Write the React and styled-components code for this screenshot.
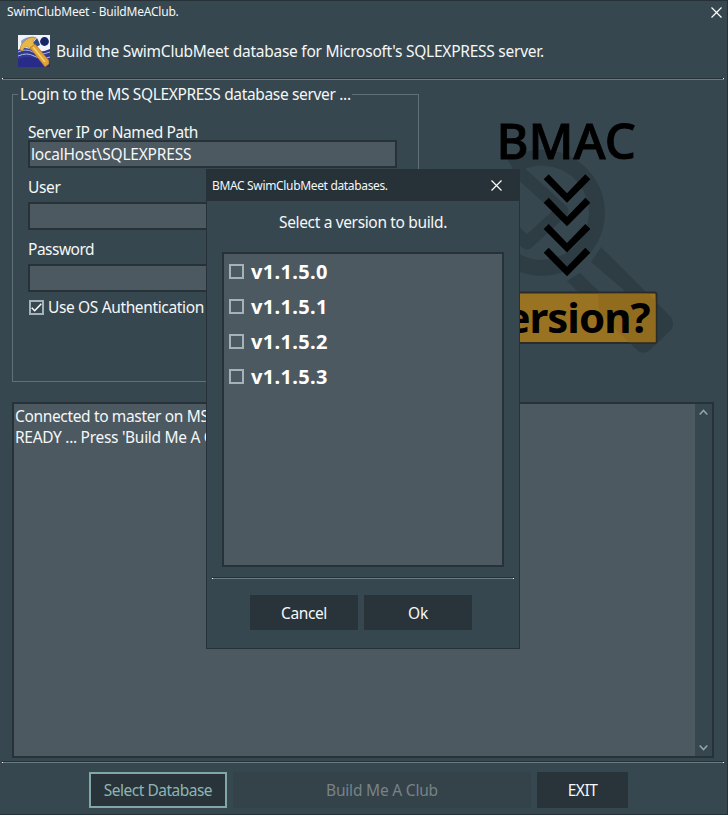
import React from "react";
import styled, { createGlobalStyle } from "styled-components";

const Global = createGlobalStyle`
  * { box-sizing: border-box; }
  body { margin: 0; background: #37474f; }
`;

const Window = styled.div`
  position: relative;
  display: flex;
  flex-direction: column;
  width: 728px;
  height: 815px;
  overflow: hidden;
  background: #37474f;
  border: solid #263238;
  border-width: 1px 1px 1px 0;
  color: #f4f7f8;
  font-family: "Noto Sans", "Open Sans", sans-serif;
  font-size: 15.5px;
  line-height: 20px;
`;

const Text = styled.span`
  display: block;
  white-space: nowrap;
  letter-spacing: ${(p) => p.$track ?? -0.3}px;
`;

const TitleBar = styled.header`
  display: flex;
  align-items: center;
  justify-content: space-between;
  height: 22px;
  padding: 0 5px 0 7px;
  font-size: 12px;
`;

const CloseIcon = styled.svg`
  width: 11px;
  height: 11px;
  stroke: #fff;
  stroke-width: 1.2;
`;

const Banner = styled.div`
  display: flex;
  align-items: center;
  gap: 6px;
  height: 55px;
  padding: 1px 0 0 18px;
`;

const AppIcon = styled.svg`
  width: 32px;
  height: 32px;
`;

const Rule = styled.div`
  flex: none;
  display: flex;
  justify-content: space-between;
  height: 2px;
  margin: ${(p) => p.$margin};
  background: linear-gradient(#263238 50%, #6b7a81 50%);

  &::before,
  &::after {
    content: "";
    width: 1px;
    height: 1px;
    margin-top: ${(p) => (p.$low ? 1 : 0)}px;
    background: #fff;
  }
`;

const Upper = styled.main`
  display: flex;
  height: 322px;
  padding: 4px 0 0 12px;
`;

const LoginGroup = styled.fieldset`
  width: 407px;
  height: 298px;
  margin: 0;
  padding: 0 0 0 15px;
  border: 1px solid #617077;
`;

const Legend = styled.legend`
  margin-left: -10px;
  padding: 0 1px 0 2px;
`;

const Field = styled.label`
  display: flex;
  flex-direction: column;
  height: ${(p) => p.$height}px;
  padding-top: ${(p) => p.$top}px;
`;

const Input = styled.span`
  display: flex;
  align-items: center;
  width: 369px;
  height: ${(p) => p.$height}px;
  margin-top: ${(p) => p.$gap}px;
  padding-left: 1px;
  background: #4c5961;
  border: 2px solid #263238;
`;

const CheckRow = styled.div`
  display: flex;
  align-items: center;
  gap: 4px;
  padding: 5px 0 0 1px;
`;

const Check = styled.svg`
  width: 15px;
  height: 15px;
  flex: none;
  fill: none;
`;

const Artwork = styled.svg`
  width: 300px;
  height: 280px;
  font-family: "Noto Sans", sans-serif;
`;

const Memo = styled.section`
  display: flex;
  height: 356px;
  margin: 0 13px 0 12px;
  background: #4c5961;
  border: 2px solid #263238;
`;

const Lines = styled.div`
  flex: 1;
  padding: 2px 0 0 1px;
  line-height: 21px;
`;

const ScrollBar = styled.div`
  display: flex;
  flex-direction: column;
  justify-content: space-between;
  align-items: center;
  width: 17px;
  padding: 5px 0;
  background: #37474f;
`;

const Arrow = styled.svg`
  width: 9px;
  height: 7px;
  fill: none;
  stroke: #94a3aa;
  stroke-width: 1.6;
`;

const Footer = styled.footer`
  display: flex;
  gap: 6px;
  padding: 9px 0 0 89px;
`;

const Button = styled.button`
  display: flex;
  align-items: center;
  justify-content: center;
  width: ${(p) => p.$width}px;
  height: ${(p) => p.$height ?? 36}px;
  margin: 0;
  padding: 0;
  border: ${(p) => (p.$focus ? "2px solid #80a8a6" : "0")};
  background: ${(p) => (p.disabled ? "#34434a" : "#29343a")};
  color: ${(p) => (p.disabled ? "#788287" : p.$focus ? "#8fb4b3" : "#f6f8f9")};
  font: inherit;
`;

const Dialog = styled.div`
  position: absolute;
  left: 206px;
  top: 168px;
  display: flex;
  flex-direction: column;
  width: 314px;
  height: 480px;
  background: #37474f;
  border: 1px solid #263238;
`;

const DialogTitle = styled.div`
  display: flex;
  align-items: center;
  justify-content: space-between;
  height: 31px;
  padding: 0 17px 0 5px;
  background: #263238;
  font-size: 12px;
`;

const Prompt = styled.div`
  display: flex;
  justify-content: center;
  padding: 11px 0 20px;
`;

const VersionList = styled.div`
  height: 315px;
  margin: 0 15px;
  padding: 0 0 0 5px;
  background: #4c5961;
  border: 2px solid #263238;
`;

const VersionRow = styled.div`
  display: flex;
  align-items: center;
  gap: 7px;
  height: 35px;
  font-size: 20px;
  font-weight: 700;
  color: #fff;
`;

const DialogButtons = styled.div`
  display: flex;
  justify-content: center;
  gap: 6px;
  padding: 16px 4px 0 0;
`;

const Close = () => (
  <CloseIcon viewBox="0 0 11 11">
    <path d="M.5.5l10 10M10.5.5l-10 10" />
  </CloseIcon>
);

const CheckMark = ({ checked }) => (
  <Check viewBox="0 0 15 15">
    <rect x="1" y="1" width="13" height="13" stroke="#a4b3ba" strokeWidth="2" />
    {checked && <path d="M2.7 7.7l3 3 6.6-7" stroke="#fff" strokeWidth="1.5" />}
  </Check>
);

const HammerIcon = () => (
  <AppIcon viewBox="0 0 32 32">
    <rect width="32" height="32" fill="#f1f3f8" />
    <path d="M3 6Q9 1 17 2L14 8 4 12z" fill="#8c9dcb" />
    <circle cx="26.5" cy="6.5" r="4.4" fill="#172567" />
    <path d="M0 15q7-4 14 0t18-1v18H0z" fill="#313995" />
    <path d="M0 17q8-4 15 0t17 0M0 21q9-4 16 0t16 1" fill="none" stroke="#adb9df" strokeWidth="1" />
    <path d="M0 24q11-4 20 0t12 1v7H0z" fill="#292b89" />
    <path d="M14 9l5-6 2 4 1 3-6 3z" fill="#304988" />
    <path d="M2 15q0-5 4-8.500Q11 1 18 2.500L15 6l1 3 2 1-5 5-3-3q-4-1-5 4z" fill="#e7b847" stroke="#8f712c" strokeWidth=".5" />
    <path d="M12 13l5-4 14 16.500v3.500l-4 3z" fill="#e2a335" stroke="#92632a" strokeWidth=".6" />
    <path d="M15 12l12 15" stroke="#f4d577" strokeWidth="1.3" />
  </AppIcon>
);

const ServerArt = () => (
  <Artwork viewBox="419 84 300 280">
    <g fill="none" stroke="#2e3c43">
      <path d="M514 167L562 211 527 243 512 229" strokeWidth="13" strokeLinejoin="round" />
      <path d="M512 166.500A55 55 0 1 1 489 228" strokeWidth="16" />
    </g>
    <path
      d="M601 247L671 317Q675 324 671 330L650 350Q644 355 638 351L567 281 580 273 611 303 625 291 591 262z"
      fill="#2e3c43"
    />
    <rect x="477" y="292.500" width="179.500" height="50.500" rx="2" fill="#9a7322" stroke="#292c28" strokeWidth="1.8" />
    <path d="M598 293.500h50l8 8v41H629l-30-30z" fill="#8a651b" fillOpacity=".55" />
    {[0, 23.5, 49.7, 73.5].map((y) => (
      <path key={y} transform={`translate(0 ${y})`} d="M543.700 179.200l5-5L567 193.300l18.300-19.100 5 5L567 202.700z" />
    ))}
    <text x="496.500" y="158.500" fontSize="49" fontWeight="500" stroke="#000" strokeWidth=".9">BMAC</text>
    <text x="649.500" y="332.500" fontSize="42" fontWeight="700" textAnchor="end" letterSpacing="-1">Version?</text>
  </Artwork>
);

const VERSIONS = ["v1.1.5.0", "v1.1.5.1", "v1.1.5.2", "v1.1.5.3"];

export default function App() {
  return (
    <Window>
      <Global />
      <TitleBar>
        <Text $track={-0.2}>SwimClubMeet - BuildMeAClub.</Text>
        <Close />
      </TitleBar>
      <Banner>
        <HammerIcon />
        <Text $track={-0.25}>Build the SwimClubMeet database for Microsoft's SQLEXPRESS server.</Text>
      </Banner>
      <Rule $margin="0 3px 0 2px" />
      <Upper>
        <LoginGroup>
          <Legend><Text $track={-0.34}>Login to the MS SQLEXPRESS database server ...</Text></Legend>
          <Field $top={18} $height={64}>
            <Text $track={-0.42}>Server IP or Named Path</Text>
            <Input $gap={-2} $height={29}><Text $track={-0.2}>localHost\SQLEXPRESS</Text></Input>
          </Field>
          <Field $top={9} $height={62}>
            <Text $track={-0.35}>User</Text>
            <Input $gap={5} $height={29} />
          </Field>
          <Field $top={9} $height={62}>
            <Text $track={-0.5}>Password</Text>
            <Input $gap={5} $height={29} />
          </Field>
          <CheckRow>
            <CheckMark checked />
            <Text $track={-0.36}>Use OS Authentication</Text>
          </CheckRow>
        </LoginGroup>
        <ServerArt />
      </Upper>
      <Memo>
        <Lines>
          <Text $track={-0.35}>Connected to master on MS</Text>
          <Text $track={-0.3}>READY ... Press 'Build Me A Club'</Text>
        </Lines>
        <ScrollBar>
          <Arrow viewBox="0 0 9 7"><path d="M.7 5.500l3.800-4 3.800 4" /></Arrow>
          <Arrow viewBox="0 0 9 7"><path d="M.7 1.500l3.800 4 3.800-4" /></Arrow>
        </ScrollBar>
      </Memo>
      <Rule $margin="3px 3px 0 2px" $low />
      <Footer>
        <Button $width={138} $focus><Text $track={-0.5}>Select Database</Text></Button>
        <Button $width={298} disabled><Text $track={-0.2}>Build Me A Club</Text></Button>
        <Button $width={91}><Text $track={-0.5}>EXIT</Text></Button>
      </Footer>
      <Dialog>
        <DialogTitle>
          <Text $track={-0.34}>BMAC SwimClubMeet databases.</Text>
          <Close />
        </DialogTitle>
        <Prompt><Text $track={-0.35}>Select a version to build.</Text></Prompt>
        <VersionList>
          {VERSIONS.map((v) => (
            <VersionRow key={v}>
              <CheckMark />
              <Text $track={0.35}>{v}</Text>
            </VersionRow>
          ))}
        </VersionList>
        <Rule $margin="10px 5px 0 5px" $low />
        <DialogButtons>
          <Button $width={108} $height={35}><Text $track={-0.4}>Cancel</Text></Button>
          <Button $width={108} $height={35}><Text $track={-0.3}>Ok</Text></Button>
        </DialogButtons>
      </Dialog>
    </Window>
  );
}
